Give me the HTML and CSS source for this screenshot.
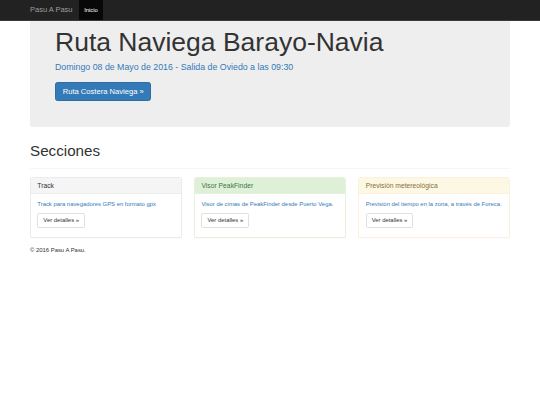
FILE: index.html
```html
<!DOCTYPE html>
<html lang="es">
<head>
    <meta charset="UTF-8">
    <meta name="viewport" content="width=device-width, initial-scale=1.0">
    <title>Pasu A Pasu</title>
    <link rel="stylesheet" href="styles.css">
</head>

<body>
    <nav class="navbar">
        <div class="container navbar-inner">
            <a class="navbar-brand" href="#">Pasu A Pasu</a>
            <ul class="nav">
                <li class="active"><a href="#">Inicio</a></li>
            </ul>
        </div>
    </nav>

    <div class="container">
        <div class="jumbotron">
            <h1>Ruta Naviega Barayo-Navia</h1>
            <p class="lead">Domingo 08 de Mayo de 2016 - Salida de Oviedo a las 09:30</p>
            <p class="actions"><a class="btn btn-primary" href="#">Ruta Costera Naviega &raquo;</a></p>
        </div>

        <div class="page-header">
            <h1>Secciones</h1>
        </div>

        <div class="row">
            <div class="panel panel-default">
                <div class="panel-heading"><h3 class="panel-title">Track</h3></div>
                <div class="panel-body">
                    <p class="text-primary">Track para navegadores GPS en formato gpx</p>
                    <p class="actions"><a class="btn btn-default" href="#">Ver detalles &raquo;</a></p>
                </div>
            </div>
            <div class="panel panel-success">
                <div class="panel-heading"><h3 class="panel-title">Visor PeakFinder</h3></div>
                <div class="panel-body">
                    <p class="text-primary">Visor de cimas de PeakFinder desde Puerto Vega.</p>
                    <p class="actions"><a class="btn btn-default" href="#">Ver detalles &raquo;</a></p>
                </div>
            </div>
            <div class="panel panel-warning">
                <div class="panel-heading"><h3 class="panel-title">Previsión metereológica</h3></div>
                <div class="panel-body">
                    <p class="text-primary">Previsión del tiempo en la zona, a través de Foreca.</p>
                    <p class="actions"><a class="btn btn-default" href="#">Ver detalles &raquo;</a></p>
                </div>
            </div>
        </div>

        <footer class="footer">
            <p>&copy; 2016 Pasu A Pasu.</p>
        </footer>
    </div>
</body>
</html>
```

FILE: styles.css
```css
/* Estilo tipo bootstrap, a escala reducida */
* {
   box-sizing: border-box;
}

body {
   margin: 0;
   font-family: "Liberation Sans", Arial, sans-serif;
   font-size: 5.9px;
   line-height: 8.4px;
   color: #333;
   background-color: #fff;
}

a {
   text-decoration: none;
}

p {
   margin: 0 0 4.2px;
}

.container {
   width: 492px;
   margin: 0 auto;
   padding: 0 6px;
}

/* Barra de navegación */
.navbar {
   height: 21px;
   background-color: #222;
   border-bottom: 1px solid #3a3a3a;
}

.navbar-inner {
   display: flex;
   height: 20px;
}

.navbar-brand {
   margin-left: -6.3px;
   padding: 0 6.3px;
   font-size: 7.5px;
   line-height: 20px;
   color: #9d9d9d;
}

.nav {
   display: flex;
   margin: 0;
   padding: 0;
   list-style: none;
}

.nav a {
   display: block;
   padding: 0 5.3px;
   line-height: 20px;
   color: #9d9d9d;
}

.nav .active a {
   background-color: #080808;
   color: #fff;
}

/* Jumbotron */
.jumbotron {
   padding: 7px 25px 20px;
   background-color: #eee;
   border-radius: 0 0 2.5px 2.5px;
}

.jumbotron h1 {
   margin: 0 0 4px;
   font-size: 26.5px;
   font-weight: normal;
   line-height: 1.1;
}

.lead {
   margin: 0 0 8.1px;
   font-size: 8.8px;
   line-height: 12.3px;
   color: #337ab7;
}

.jumbotron .actions {
   margin-bottom: 6px;
}

.btn {
   display: inline-block;
   border: 1px solid transparent;
   border-radius: 1.7px;
   white-space: nowrap;
   vertical-align: top;
}

.btn-primary {
   padding: 4px 6.7px;
   font-size: 7.6px;
   line-height: 9px;
   color: #fff;
   background-color: #337ab7;
   border-color: #2e6da4;
   border-radius: 2.5px;
}

.btn-default {
   padding: 2.5px 5px;
   color: #333;
   background-color: #fff;
   border-color: #e0e0e0;
}

/* Cabecera de secciones */
.page-header {
   margin: 16.6px 0 8.3px;
   padding-bottom: 3.8px;
   border-bottom: 1px solid #f6f6f6;
}

.page-header h1 {
   margin: 0 0 4.2px;
   font-size: 15.2px;
   font-weight: normal;
   line-height: 1.1;
}

/* Paneles */
.row {
   display: grid;
   grid-template-columns: repeat(3, 1fr);
   gap: 12.6px;
}

.panel {
   margin-bottom: 8.4px;
   background-color: #fff;
   border: 1px solid #ebebeb;
   border-radius: 1.7px;
   box-shadow: 0 0.4px 0.4px rgba(0, 0, 0, 0.04);
}

.panel-heading {
   padding: 3.65px 6.3px;
   border-bottom: 1px solid #ebebeb;
   border-radius: 1.7px 1.7px 0 0;
}

.panel-title {
   margin: 0;
   font-size: 6.75px;
   font-weight: normal;
   line-height: 7.4px;
}

.panel-body {
   padding: 6.3px 6.3px 5.8px;
}

.panel-default .panel-heading {
   color: #333;
   background-color: #f5f5f5;
}

.panel-success {
   border-color: #e6f1de;
}

.panel-success .panel-heading {
   color: #3c763d;
   background-color: #dff0d8;
   border-color: #e6f1de;
}

.panel-warning {
   border-color: #fcf1de;
}

.panel-warning .panel-heading {
   color: #8a6d3b;
   background-color: #fcf8e3;
   border-color: #fcf1de;
}

.text-primary {
   color: #337ab7;
}

.panel-body .actions {
   height: 14.4px;
}

.footer p {
   margin: 0;
}
```
